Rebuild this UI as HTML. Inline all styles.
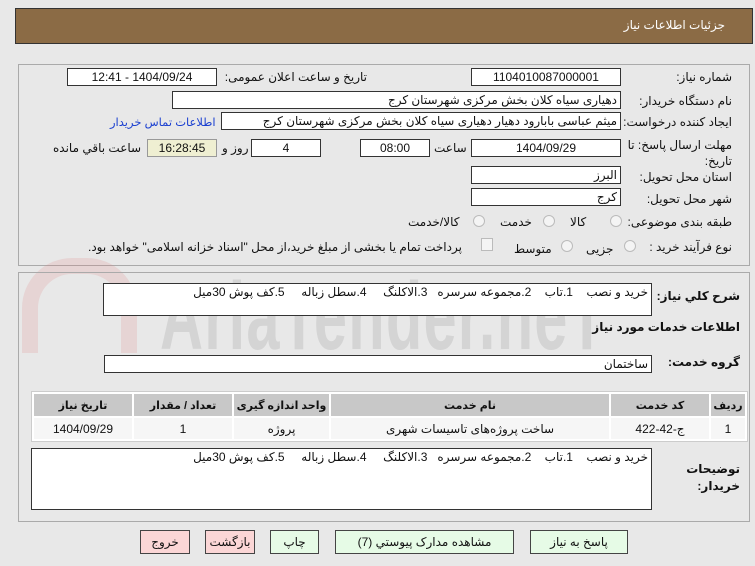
<!DOCTYPE html>
<html><head><meta charset="utf-8"><style>
*{box-sizing:border-box;margin:0;padding:0}
body{width:755px;height:566px;background:#e8e8e8;font-family:"Liberation Sans","DejaVu Sans",sans-serif;font-size:12px;color:#111;position:relative;overflow:hidden}
.a{position:absolute;white-space:nowrap;direction:rtl}
.box{position:absolute;background:#fff;border:1px solid #333;white-space:nowrap;direction:rtl;font-size:12px;line-height:16px;overflow:hidden}
.c{text-align:center}
.r{text-align:right;padding-right:3px}
.panel{position:absolute;border:1px solid #aaa}
.rad{position:absolute;width:12px;height:12px;border-radius:50%;border:1px solid #bbb;background:#f4f4f4}
.btn{position:absolute;border:1px solid #444;text-align:center;line-height:22px;font-size:12px;direction:rtl}
table{position:absolute;border-collapse:separate;border-spacing:2px;background:#fff;border:1px solid #ccc}
th{background:#c8c8c8;font-weight:bold;height:22px;font-size:11px}
td{background:#f6f6f6;height:21px;text-align:center;font-size:12px}
.wm{position:absolute;left:160px;top:262px;font-size:96px;font-weight:bold;color:rgba(140,140,140,0.22);transform:scaleX(0.62);transform-origin:left top;white-space:nowrap;letter-spacing:2px}
</style></head><body>
<div style="position:absolute;left:15px;top:8px;width:738px;height:36px;background:#8b6b45;border:1px solid #333"></div>
<div class="a" style="right:30px;top:18px;color:#fff;font-size:12px">جزئیات اطلاعات نیاز</div>

<div class="panel" style="left:18px;top:64px;width:732px;height:202px"></div>
<div class="wm">AriaTender.neT</div>
<div style="position:absolute;left:22px;top:258px;width:115px;height:95px;border:16px solid rgba(220,120,120,0.18);border-bottom:none;border-radius:50px 50px 0 0"></div>

<div class="a" style="right:23px;top:70px">شماره نیاز:</div>
<div class="box c" style="left:471px;top:68px;width:150px;height:18px">1104010087000001</div>
<div class="a" style="right:388px;top:70px">تاریخ و ساعت اعلان عمومی:</div>
<div class="box c" style="left:67px;top:68px;width:150px;height:18px">1404/09/24 - 12:41</div>

<div class="a" style="right:23px;top:94px">نام دستگاه خریدار:</div>
<div class="box r" style="left:172px;top:91px;width:449px;height:18px">دهیاری سیاه کلان بخش مرکزی شهرستان کرج</div>

<div class="a" style="right:23px;top:115px">ایجاد کننده درخواست:</div>
<div class="box r" style="left:221px;top:112px;width:400px;height:18px">میثم عباسی بابارود دهیار دهیاری سیاه کلان بخش مرکزی شهرستان کرج</div>
<div class="a" style="left:110px;top:115px;color:#1a3fd0;font-size:11.5px">اطلاعات تماس خریدار</div>

<div class="a" style="right:23px;top:138px">مهلت ارسال پاسخ: تا</div>
<div class="a" style="right:23px;top:154px">تاریخ:</div>
<div class="box c" style="left:471px;top:139px;width:150px;height:18px">1404/09/29</div>
<div class="a" style="left:434px;top:141px">ساعت</div>
<div class="box c" style="left:360px;top:139px;width:70px;height:18px">08:00</div>
<div class="box c" style="left:251px;top:139px;width:70px;height:18px">4</div>
<div class="a" style="left:222px;top:141px">روز و</div>
<div class="box c" style="left:147px;top:139px;width:70px;height:18px;background:#efefd2;border-color:#999">16:28:45</div>
<div class="a" style="left:53px;top:141px">ساعت باقي مانده</div>

<div class="a" style="right:23px;top:170px">استان محل تحویل:</div>
<div class="box r" style="left:471px;top:166px;width:150px;height:18px">البرز</div>
<div class="a" style="right:23px;top:192px">شهر محل تحویل:</div>
<div class="box r" style="left:471px;top:188px;width:150px;height:18px">کرج</div>

<div class="a" style="right:23px;top:215px">طبقه بندی موضوعی:</div>
<div class="rad" style="left:610px;top:215px"></div><div class="a" style="left:570px;top:215px">کالا</div>
<div class="rad" style="left:543px;top:215px"></div><div class="a" style="left:500px;top:215px">خدمت</div>
<div class="rad" style="left:473px;top:215px"></div><div class="a" style="left:408px;top:215px">کالا/خدمت</div>

<div class="a" style="right:23px;top:240px">نوع فرآیند خرید :</div>
<div class="rad" style="left:624px;top:240px"></div><div class="a" style="left:586px;top:242px">جزیی</div>
<div class="rad" style="left:561px;top:240px"></div><div class="a" style="left:514px;top:242px">متوسط</div>
<div style="position:absolute;left:481px;top:238px;width:12px;height:13px;border:1px solid #bbb;background:#f4f4f4"></div>
<div class="a" style="left:88px;top:240px">پرداخت تمام یا بخشی از مبلغ خرید،از محل "اسناد خزانه اسلامی" خواهد بود.</div>

<div class="panel" style="left:18px;top:272px;width:732px;height:250px"></div>
<div class="a" style="right:15px;top:289px;font-weight:bold;font-size:12px">شرح کلي نیاز:</div>
<div class="box" style="left:103px;top:283px;width:549px;height:33px;padding-right:3px;text-align:right">خرید و نصب &nbsp;&nbsp; 1.تاب &nbsp;&nbsp; 2.مجموعه سرسره &nbsp; 3.الاکلنگ &nbsp;&nbsp;&nbsp; 4.سطل زباله &nbsp;&nbsp;&nbsp; 5.کف پوش 30میل</div>
<div class="a" style="right:15px;top:320px;font-weight:bold;font-size:12px">اطلاعات خدمات مورد نیاز</div>
<div class="a" style="right:15px;top:355px;font-weight:bold;font-size:12px">گروه خدمت:</div>
<div class="box r" style="left:104px;top:355px;width:548px;height:18px">ساختمان</div>

<table style="left:31px;top:391px;width:717px;direction:rtl">
<tr><th style="width:34px">ردیف</th><th style="width:98px">کد خدمت</th><th>نام خدمت</th><th style="width:95px">واحد اندازه گیری</th><th style="width:98px">تعداد / مقدار</th><th style="width:98px">تاریخ نیاز</th></tr>
<tr><td>1</td><td>ج-42-422</td><td>ساخت پروژه‌های تاسیسات شهری</td><td>پروژه</td><td>1</td><td>1404/09/29</td></tr>
</table>

<div class="box" style="left:31px;top:448px;width:621px;height:62px;padding-right:3px;text-align:right">خرید و نصب &nbsp;&nbsp; 1.تاب &nbsp;&nbsp; 2.مجموعه سرسره &nbsp; 3.الاکلنگ &nbsp;&nbsp;&nbsp; 4.سطل زباله &nbsp;&nbsp;&nbsp; 5.کف پوش 30میل</div>
<div class="a" style="right:15px;top:462px;font-weight:bold;font-size:12px">توضیحات</div>
<div class="a" style="right:15px;top:479px;font-weight:bold;font-size:12px">خریدار:</div>

<div class="btn" style="left:530px;top:530px;width:98px;height:24px;background:#e6fbe6">پاسخ به نیاز</div>
<div class="btn" style="left:335px;top:530px;width:179px;height:24px;background:#e6fbe6">مشاهده مدارک پیوستي (7)</div>
<div class="btn" style="left:270px;top:530px;width:49px;height:24px;background:#e6fbe6">چاپ</div>
<div class="btn" style="left:205px;top:530px;width:50px;height:24px;background:#fbd6d6">بازگشت</div>
<div class="btn" style="left:140px;top:530px;width:50px;height:24px;background:#fbd6d6">خروج</div>
</body></html>
